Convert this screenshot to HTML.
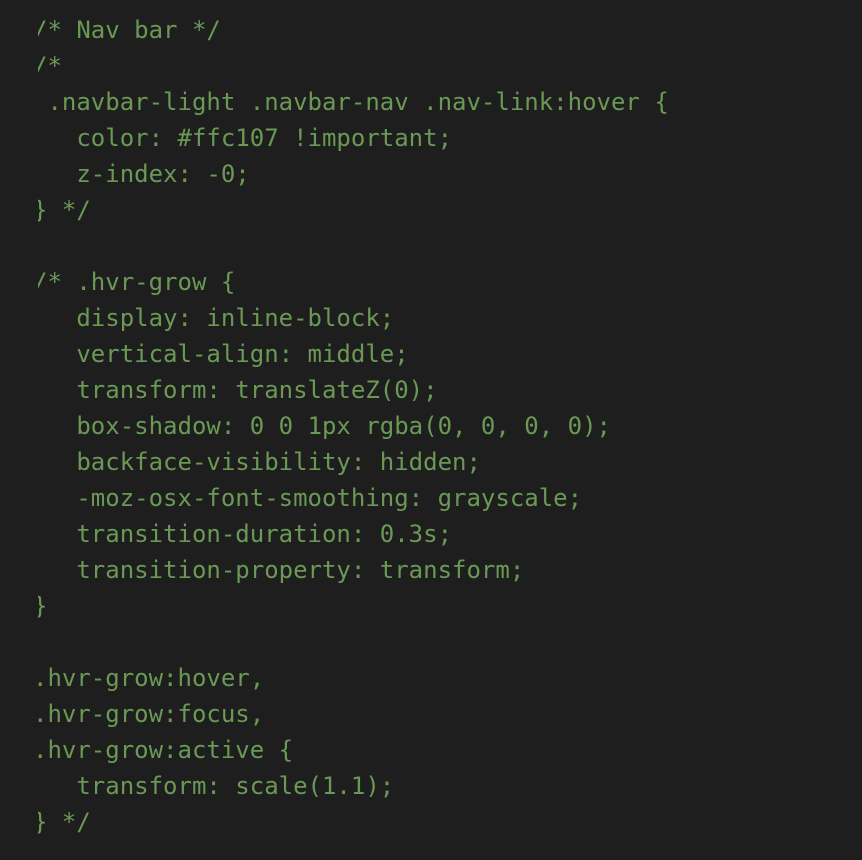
<!DOCTYPE html>
<html><head><style>
html,body{margin:0;padding:0;background:#1e1e1e;width:862px;height:860px;overflow:hidden}
.clip{position:absolute;left:38px;top:0;width:824px;height:860px;overflow:hidden}
pre{position:absolute;left:-5px;top:12px;margin:0;font-family:"DejaVu Sans Mono","Liberation Mono",monospace;font-size:24px;line-height:36px;color:#6a9955}
</style></head><body><div class="clip"><pre>/* Nav bar */
/*
 .navbar-light .navbar-nav .nav-link:hover {
   color: #ffc107 !important;
   z-index: -0;
} */

/* .hvr-grow {
   display: inline-block;
   vertical-align: middle;
   transform: translateZ(0);
   box-shadow: 0 0 1px rgba(0, 0, 0, 0);
   backface-visibility: hidden;
   -moz-osx-font-smoothing: grayscale;
   transition-duration: 0.3s;
   transition-property: transform;
}

.hvr-grow:hover,
.hvr-grow:focus,
.hvr-grow:active {
   transform: scale(1.1);
} */</pre></div></body></html>
